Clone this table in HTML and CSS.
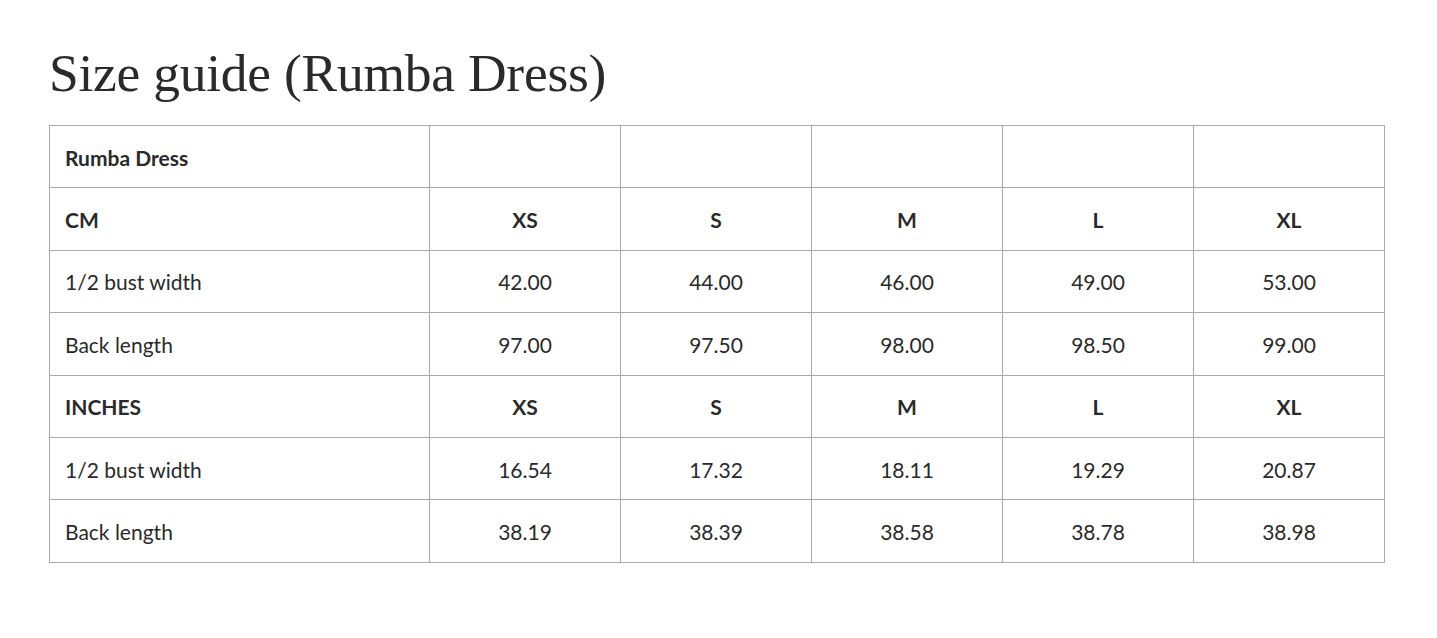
FILE: index.html
```html
<!DOCTYPE html>
<html lang="en">
<head>
<meta charset="utf-8">
<title>Size guide (Rumba Dress)</title>
<link rel="stylesheet" href="styles.css">
</head>
<body>
<main class="page">
  <h1 class="title">Size guide (Rumba Dress)</h1>
  <table class="size-table">
    <tbody>
      <tr class="head"><td>Rumba Dress</td><td></td><td></td><td></td><td></td><td></td></tr>
      <tr class="head"><td>CM</td><td>XS</td><td>S</td><td>M</td><td>L</td><td>XL</td></tr>
      <tr><td>1/2 bust width</td><td>42.00</td><td>44.00</td><td>46.00</td><td>49.00</td><td>53.00</td></tr>
      <tr><td>Back length</td><td>97.00</td><td>97.50</td><td>98.00</td><td>98.50</td><td>99.00</td></tr>
      <tr class="head"><td>INCHES</td><td>XS</td><td>S</td><td>M</td><td>L</td><td>XL</td></tr>
      <tr><td>1/2 bust width</td><td>16.54</td><td>17.32</td><td>18.11</td><td>19.29</td><td>20.87</td></tr>
      <tr><td>Back length</td><td>38.19</td><td>38.39</td><td>38.58</td><td>38.78</td><td>38.98</td></tr>
    </tbody>
  </table>
</main>
</body>
</html>
```
FILE: styles.css
```css
html, body {
  margin: 0;
  padding: 0;
  background: #fff;
}
.page {
  padding: 42px 52px 0 49px;
  color: #2b2b2b;
}
.title {
  margin: 0 0 20px 0;
  font-family: "Liberation Serif", "DejaVu Serif", serif;
  font-weight: normal;
  font-size: 53.5px;
  line-height: 63px;
  color: #2a2a2a;
  letter-spacing: -0.25px;
}
.size-table {
  width: 1336px;
  border-collapse: collapse;
  font-family: Lato, "Open Sans", sans-serif;
  font-size: 21px;
  color: #2a2a2a;
}
.size-table td {
  border: 1px solid #a9a9a9;
  height: 62.4px;
  padding: 1px 15px 0;
  text-align: center;
  width: 191px;
  box-sizing: border-box;
}
.size-table td:first-child {
  text-align: left;
  width: 380px;
}
.size-table tr.head td {
  font-weight: bold;
}
```
